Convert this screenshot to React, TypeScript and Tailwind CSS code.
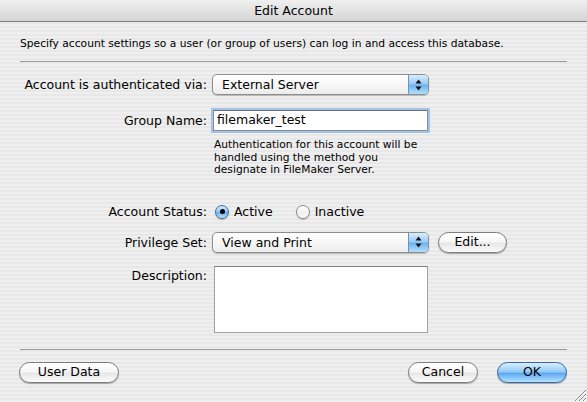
import type { ReactNode } from 'react'

// Aqua-style dialog bits
function Arrows() {
  return (
    <svg width="7" height="12" viewBox="0 0 7 12">
      <path d="M3.5 0.5 L6.5 4.5 L0.5 4.5 Z" fill="#111" />
      <path d="M0.5 7.5 L6.5 7.5 L3.5 11.5 Z" fill="#111" />
    </svg>
  )
}

function Popup({ value }: { value: string }) {
  return (
    <div className="flex h-[21px] w-[217px] items-stretch rounded-[5px] border border-[#8e8e8e] bg-[linear-gradient(to_bottom,#ffffff_0%,#f7f7f7_50%,#ececec_100%)] shadow-[0_1px_1px_rgba(0,0,0,0.22)]">
      <span className="flex-1 pl-[9px] text-[12.5px] leading-[19px] text-black">{value}</span>
      <div className="flex w-[20px] items-center justify-center rounded-r-[4px] border-l border-[#6d92c0] bg-[linear-gradient(to_bottom,#d9edfd_0%,#9ccdf7_45%,#6fb3f1_55%,#b4dffd_100%)]">
        <Arrows />
      </div>
    </div>
  )
}

function AquaButton({ children, width, primary }: { children: ReactNode; width: string; primary?: boolean }) {
  return (
    <button
      className={`${width} flex h-[21px] items-center justify-center rounded-full border text-[12.5px] leading-none text-black shadow-[0_1px_1px_rgba(0,0,0,0.3)] ${
        primary
          ? 'border-[#3b679d] bg-[linear-gradient(to_bottom,#d8edfe_0%,#95cbf7_45%,#5ea9f0_55%,#b2e1ff_100%)]'
          : 'border-[#7c7c7c] bg-[linear-gradient(to_bottom,#ffffff_0%,#f6f6f6_48%,#e6e6e6_52%,#fbfbfb_100%)]'
      }`}
    >
      {children}
    </button>
  )
}

function Radio({ checked, label }: { checked?: boolean; label: string }) {
  return (
    <div className="flex items-center">
      {checked ? (
        <span className="flex h-[14px] w-[14px] items-center justify-center rounded-full border border-[#3f6da5] bg-[linear-gradient(to_bottom,#d5ebfd_0%,#8fc6f6_50%,#66adf0_55%,#c3e6ff_100%)] shadow-[0_1px_1px_rgba(0,0,0,0.25)]">
          <span className="h-[5px] w-[5px] rounded-full bg-black" />
        </span>
      ) : (
        <span className="h-[14px] w-[14px] rounded-full border border-[#8a8a8a] bg-[linear-gradient(to_bottom,#ffffff_0%,#f1f1f1_55%,#fafafa_100%)] shadow-[0_1px_1px_rgba(0,0,0,0.2)]" />
      )}
      <span className="ml-[5px] text-[12.5px] leading-[15px] text-black">{label}</span>
    </div>
  )
}

function Label({ children, className = '' }: { children: ReactNode; className?: string }) {
  return <div className={`w-[187px] shrink-0 text-right text-[12.5px] leading-[15px] text-black ${className}`}>{children}</div>
}

export default function App() {
  return (
    <div className="relative h-[402px] w-[587px] overflow-hidden bg-[repeating-linear-gradient(to_bottom,#efefef_0px,#efefef_2px,#e8e8e8_2px,#e8e8e8_4px)] font-['DejaVu_Sans',sans-serif] text-black">
      {/* Title bar */}
      <div className="h-[22px] border-b border-[#808080] bg-[linear-gradient(to_bottom,#f0f0f0,#d4d4d4)] text-center text-[12.5px] leading-[21px]">
        Edit Account
      </div>

      <div className="flex flex-col px-[20px]">
        <p className="mt-[15px] text-[10.7px] leading-[13px]">
          Specify account settings so a user (or group of users) can log in and access this database.
        </p>
        <div className="mt-[11px] h-px bg-[#9a9a9a]" />

        {/* Authentication */}
        <div className="mt-[12px] flex h-[21px] items-center">
          <Label>Account is authenticated via:</Label>
          <div className="ml-[5px]">
            <Popup value="External Server" />
          </div>
        </div>

        {/* Group name */}
        <div className="mt-[15px] flex h-[21px] items-center">
          <Label>Group Name:</Label>
          <div className="ml-[6px] flex h-[21px] w-[215px] items-center border border-[#8c8c8c] border-t-[#6f6f6f] bg-white pl-[3px] text-[12.5px] shadow-[0_0_0_2px_#a3c4ea]">
            filemaker_test
          </div>
        </div>
        <p className="ml-[194px] mt-[8px] text-[10.7px] leading-[12.5px]">
          Authentication for this account will be
          <br />
          handled using the method you
          <br />
          designate in FileMaker Server.
        </p>

        {/* Status */}
        <div className="mt-[26px] flex h-[18px] items-center">
          <Label>Account Status:</Label>
          <div className="ml-[8px] flex items-center gap-[23px]">
            <Radio checked label="Active" />
            <Radio label="Inactive" />
          </div>
        </div>

        {/* Privilege set */}
        <div className="mt-[11px] flex h-[21px] items-center">
          <Label>Privilege Set:</Label>
          <div className="ml-[5px]">
            <Popup value="View and Print" />
          </div>
          <div className="ml-[9px]">
            <AquaButton width="w-[69px]">Edit...</AquaButton>
          </div>
        </div>

        {/* Description */}
        <div className="mt-[13px] flex items-start">
          <Label className="pt-[2px]">Description:</Label>
          <div className="ml-[7px] h-[67px] w-[214px] border border-[#a0a0a0] border-t-[#7f7f7f] bg-white" />
        </div>

        <div className="mt-[16px] h-px bg-[#9a9a9a]" />

        {/* Footer buttons */}
        <div className="mt-[12px] flex items-center">
          <div className="-ml-[1px]">
            <AquaButton width="w-[100px]">User Data</AquaButton>
          </div>
          <div className="ml-auto flex items-center gap-[19px]">
            <AquaButton width="w-[70px]">Cancel</AquaButton>
            <AquaButton width="w-[70px]" primary>
              OK
            </AquaButton>
          </div>
        </div>
      </div>

      {/* Resize grip */}
      <svg className="absolute bottom-0 right-0" width="15" height="15" viewBox="0 0 15 15">
        <path d="M14 3 L3 14 M14 7 L7 14 M14 11 L11 14" stroke="#8a8a8a" strokeWidth="1" />
        <path d="M14 4 L4 14 M14 8 L8 14 M14 12 L12 14" stroke="#ffffff" strokeWidth="1" />
      </svg>
    </div>
  )
}
